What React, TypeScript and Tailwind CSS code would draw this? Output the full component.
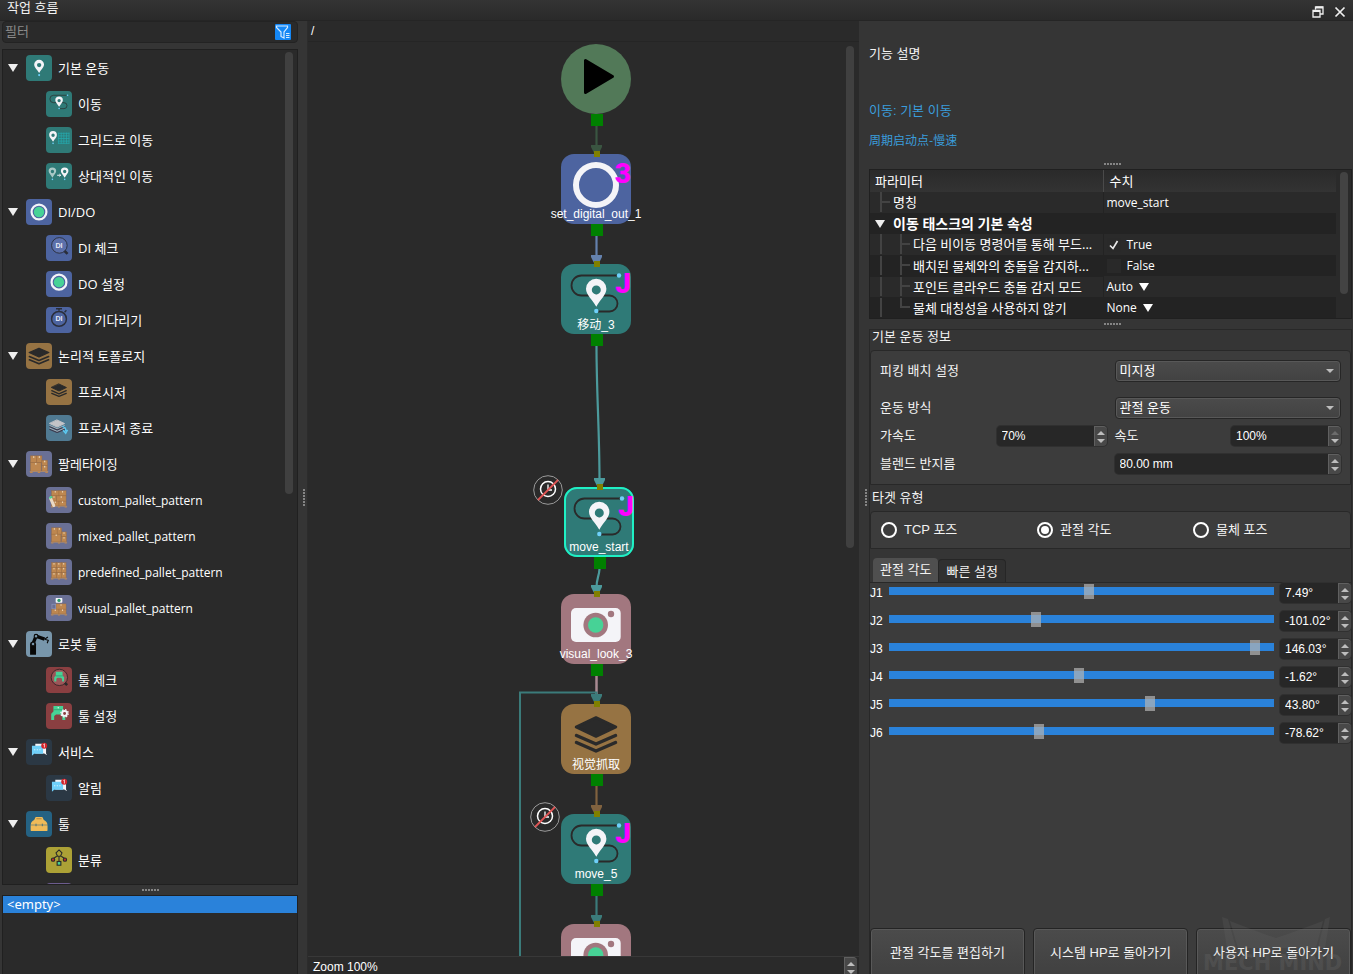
import React, { useState } from "react";
import type { ReactNode } from "react";

/* ---------- artwork, all drawn on a 70 x 70 tile ---------- */

const PIN = "M35.3 42.7C31 35 25 31 25 24.8a10.2 10 0 0 1 20.4 0C45.4 31 39.500 35 35.300 42.700ZM35.300 21.400a4.500 4.500 0 1 0 0 9a4.500 4.500 0 0 0 0-9Z";

function Pin({ transform, fill = "#f4f4f8" }: { transform?: string; fill?: string }) {
  return (
    <g transform={transform}>
      <path d={PIN} fill={fill} fillRule="evenodd" />
      <circle cx="35.300" cy="47" r="2.200" fill="#6fd0fa" />
    </g>
  );
}

function MoveArt() {
  return (
    <g>
      <path d="M56 11.500H20.500a10 10 0 0 0 0 20H48.500a8 8 0 0 1 0 16H37" fill="none" stroke="#2a2a2a" strokeWidth="1.800" />
      <circle cx="58" cy="11.500" r="2.200" fill="#6fd0fa" />
      <Pin />
    </g>
  );
}

function GridMoveArt() {
  return (
    <g>
      <Pin transform="translate(-17 -4) scale(1.020)" />
      <g stroke="#25a9ad" strokeWidth="2">
        {[34, 41, 48, 55, 62].map((v) => (
          <path key={v} d={`M${v} 15V45`} />
        ))}
        {[17, 24, 31, 38, 44].map((v) => (
          <path key={v} d={`M32 ${v}H63`} />
        ))}
      </g>
    </g>
  );
}

function RelativeArt() {
  return (
    <g>
      <Pin transform="translate(-18 -3)" fill="#a9c8c6" />
      <Pin transform="translate(15 -3)" />
      <path d="M30 33H39M36 30l4 3-4 3" stroke="#f4f4f8" strokeWidth="2.500" fill="none" />
    </g>
  );
}

function RingArt({ cy = 30, filled = true }: { cy?: number; filled?: boolean }) {
  return (
    <g>
      <circle cx="35" cy={cy} r="20" fill="none" stroke="#f4f4f8" strokeWidth="6" />
      {filled && <circle cx="35" cy={cy} r="14" fill="#47d296" />}
    </g>
  );
}

function DiArt({ timer = false }: { timer?: boolean }) {
  return (
    <g>
      {timer ? (
        <g stroke="#2a2e3a" strokeWidth="4" fill="none">
          <path d="M27 5H43M35 5V10M50 14l5-5" />
          <circle cx="35" cy="32" r="20" />
        </g>
      ) : (
        <g>
          <circle cx="36" cy="28" r="21" fill="#5c70ab" stroke="#2a2e3a" strokeWidth="2.500" />
          <path d="M50 43l8 8" stroke="#2a2e3a" strokeWidth="7" />
        </g>
      )}
      <text x="35" y={timer ? 39 : 34} textAnchor="middle" fontSize="19" fontWeight="700" fill="#e8ebf5" fontFamily="Liberation Sans, sans-serif">
        DI
      </text>
    </g>
  );
}

function LayersArt({ large = false, arrow = false }: { large?: boolean; arrow?: boolean }) {
  const t = large ? "translate(-11.200 -3) scale(1.320 1.250)" : arrow ? "translate(-5 0)" : undefined;
  const lower = arrow ? "#3c3c50" : "#2a2a2a";
  return (
    <g>
      <g transform={t} strokeLinejoin="round" strokeLinecap="round">
        <path d="M35 13.500L55 23L35 32.500L15 23Z" fill={arrow ? "#c4c4c8" : "#2a2a2a"} stroke={arrow ? "#c4c4c8" : "#2a2a2a"} strokeWidth="2.500" />
        <path d="M15.500 31.500L35 40L54.500 31.500M15.500 38.500L35 47L54.500 38.500" fill="none" stroke={lower} strokeWidth="3.500" />
        {arrow && <path d="M15.500 28.500L35 37L54.500 28.500M15.500 35.500L35 44L54.500 35.500" fill="none" stroke="#c4c4c8" strokeWidth="2" />}
      </g>
      {arrow && <path d="M44 31C52 32 54 38 53 44M46 41l7 8 5-9" fill="none" stroke="#5cc8f0" strokeWidth="4" />}
    </g>
  );
}

function CameraArt() {
  return (
    <g>
      <rect x="10" y="14" width="49.700" height="34" rx="5" fill="#f4f4f8" />
      <circle cx="34.700" cy="31" r="12.300" fill="#a2777f" />
      <circle cx="34.700" cy="31" r="7.700" fill="#47d296" />
      <circle cx="50" cy="20" r="3.200" fill="#a2777f" />
    </g>
  );
}

function Boxes({ cells }: { cells: number[][] }) {
  return (
    <g>
      {cells.map(([x, y, w, h], i) => (
        <g key={i}>
          <rect x={x} y={y} width={w} height={h} fill="#bd8750" stroke="#9a6a3c" strokeWidth="1" />
          <rect x={x + w / 2 - 1.5} y={y + 1} width="3" height="4" fill="#e9d3b4" />
        </g>
      ))}
    </g>
  );
}

function PalletArt({ kind, large = false }: { kind: "mixed" | "custom" | "grid" | "visual"; large?: boolean }) {
  const sets = {
    mixed: [[15, 13, 15, 17], [30, 13, 12, 17], [15, 30, 25, 21], [42, 24, 13, 13], [42, 37, 13, 14]],
    custom: [[15, 10, 20, 14], [35, 10, 19, 14], [15, 24, 13, 14], [28, 24, 26, 14], [15, 38, 20, 13], [35, 38, 19, 13]],
    grid: [[15, 10, 13, 13], [28, 10, 13, 13], [41, 10, 13, 13], [15, 23, 13, 14], [28, 23, 13, 14], [41, 23, 13, 14], [15, 37, 13, 14], [28, 37, 13, 14], [41, 37, 13, 14]],
    visual: [[27, 24, 27, 14], [15, 38, 20, 13], [35, 38, 19, 13]],
  };
  return (
    <g transform={large ? "translate(-5 -1) scale(1.140 1.080)" : undefined}>
      <Boxes cells={sets[kind]} />
      <path d="M13 52H57" stroke="#c99a68" strokeWidth="1.500" />
      <path d="M14 54h6M32 54h6M50 54h6" stroke="#bd8750" strokeWidth="3" />
      {kind === "custom" && (
        <g>
          <path d="M12 30L21 50" stroke="#ead9c4" strokeWidth="8" strokeLinecap="round" />
          <path d="M9 30l8-4" stroke="#47d296" strokeWidth="5" />
        </g>
      )}
      {kind === "visual" && (
        <g>
          <rect x="26" y="8" width="18" height="13" rx="2" fill="#f4f4f8" />
          <circle cx="35" cy="14.500" r="4.500" fill="#2f9c70" />
          <rect x="16" y="25" width="10" height="12" fill="none" stroke="#8b93b8" strokeWidth="2" />
        </g>
      )}
    </g>
  );
}

function RobotArt() {
  return (
    <g fill="#080808">
      <path d="M11 64V36a8 8 0 0 1 16 0V64Z" />
      <path d="M19 34L27 14L50 22" fill="none" stroke="#080808" strokeWidth="9" strokeLinejoin="round" />
      <path d="M50 22l9-6M50 22l10 3-3 8" fill="none" stroke="#080808" strokeWidth="3" />
      <circle cx="19" cy="35" r="4.500" fill="#7896ab" stroke="#080808" strokeWidth="2" />
      <circle cx="27" cy="14" r="5" fill="#7896ab" stroke="#080808" strokeWidth="3" />
    </g>
  );
}

const GRIPPER = "M22 8H48V23L54 29V46H46V35L41 31H29L24 35V46H16V29L22 23Z";

function ToolCheckArt() {
  return (
    <g>
      <circle cx="36" cy="28" r="22" fill="#9c5558" stroke="#3a2628" strokeWidth="2.500" />
      <path d={GRIPPER} fill="#47d296" transform="translate(11 7) scale(.700)" />
      <path d="M26 24H45" stroke="#2f7f60" strokeWidth="1.500" />
      <path d="M51 43l6 6" stroke="#2a2a2a" strokeWidth="7" />
    </g>
  );
}

function ToolSetArt() {
  return (
    <g>
      <path d={GRIPPER} fill="#47d296" transform="translate(-2 0)" />
      <path d="M20 18H46" stroke="#2f9c70" strokeWidth="2" />
      <circle cx="33" cy="13" r="2" fill="#d8f7e8" />
      <circle cx="50" cy="28" r="6.500" fill="#8a3f41" stroke="#f4f4f8" strokeWidth="5" />
      <circle cx="50" cy="28" r="10" fill="none" stroke="#f4f4f8" strokeWidth="3.500" strokeDasharray="4 3.850" />
    </g>
  );
}

function ChatArt() {
  return (
    <g>
      <path d="M25 13H54V39l3 5-8-5H25Z" fill="#f4f4f8" />
      <path d="M16 18H46V40H22L16 45Z" fill="#6fd0fa" />
      <path d="M22 29h3M29 29h3M36 29h3" stroke="#e9f8ff" strokeWidth="2.500" />
      <circle cx="49" cy="18" r="8" fill="#d2232a" />
      <path d="M47 15l2.500-2V23" stroke="#ffffff" strokeWidth="2" fill="none" />
    </g>
  );
}

function ToolboxArt() {
  return (
    <g>
      <path d="M12.500 37C13.500 30 17 26 22 24L26 16H44L48 24C53 26 57 30 58 37Z" fill="#f0bb58" />
      <path d="M12.500 38.500H58V52a2 2 0 0 1-2 2H14.500a2 2 0 0 1-2-2Z" fill="#f0bb58" />
      <path d="M27 34v7M44 34v7" stroke="#256283" strokeWidth="2" />
      <path d="M28 21H42" stroke="#b0863f" strokeWidth="3" />
    </g>
  );
}

function SortArt() {
  return (
    <g fill="none" stroke="#2a2a2a" strokeWidth="3">
      <path d="M35 8l8 8-4 9h-8l-4-9Z" />
      <path d="M35 25V39M29 25l-9 6M41 25l9 6" />
      <circle cx="19" cy="34" r="4.500" fill="#c02a2e" />
      <circle cx="51" cy="34" r="4.500" fill="#c02a2e" />
      <rect x="30" y="39" width="10" height="10" fill="#47d296" />
    </g>
  );
}

function Tile({ className, children }: { className: string; children?: ReactNode }) {
  return (
    <svg viewBox="0 0 70 70" className={`size-[26px] shrink-0 rounded-[4px] ${className}`} aria-hidden="true">
      {children}
    </svg>
  );
}

/* ---------- task library tree ---------- */

type TreeRow = { label: string; child?: boolean; latin?: boolean; bg: string; art: ReactNode };

const TEAL = "bg-[#2f7a77]";
const BLUE = "bg-[#4d64a0]";
const BROWN = "bg-[#967343]";
const SLATE = "bg-[#6a7095]";
const RED = "bg-[#8a3f41]";
const NAVY = "bg-[#2b3844]";

const tree: TreeRow[] = [
  { label: "기본 운동", bg: TEAL, art: <Pin transform="translate(-10.500 -6) scale(1.300 1.280)" /> },
  { label: "이동", child: true, bg: TEAL, art: <MoveArt /> },
  { label: "그리드로 이동", child: true, bg: TEAL, art: <GridMoveArt /> },
  { label: "상대적인 이동", child: true, bg: TEAL, art: <RelativeArt /> },
  { label: "DI/DO", bg: BLUE, art: <RingArt cy={35} /> },
  { label: "DI 체크", child: true, bg: BLUE, art: <DiArt /> },
  { label: "DO 설정", child: true, bg: BLUE, art: <RingArt /> },
  { label: "DI 기다리기", child: true, bg: BLUE, art: <DiArt timer /> },
  { label: "논리적 토폴로지", bg: BROWN, art: <LayersArt large /> },
  { label: "프로시저", child: true, bg: BROWN, art: <LayersArt /> },
  { label: "프로시저 종료", child: true, bg: "bg-[#507a92]", art: <LayersArt arrow /> },
  { label: "팔레타이징", bg: SLATE, art: <PalletArt kind="mixed" large /> },
  { label: "custom_pallet_pattern", child: true, latin: true, bg: SLATE, art: <PalletArt kind="custom" /> },
  { label: "mixed_pallet_pattern", child: true, latin: true, bg: SLATE, art: <PalletArt kind="mixed" /> },
  { label: "predefined_pallet_pattern", child: true, latin: true, bg: SLATE, art: <PalletArt kind="grid" /> },
  { label: "visual_pallet_pattern", child: true, latin: true, bg: SLATE, art: <PalletArt kind="visual" /> },
  { label: "로봇 툴", bg: "bg-[#7896ab]", art: <RobotArt /> },
  { label: "툴 체크", child: true, bg: RED, art: <ToolCheckArt /> },
  { label: "툴 설정", child: true, bg: RED, art: <ToolSetArt /> },
  { label: "서비스", bg: NAVY, art: <ChatArt /> },
  { label: "알림", child: true, bg: NAVY, art: <ChatArt /> },
  { label: "툴", bg: "bg-[#256283]", art: <ToolboxArt /> },
  { label: "분류", child: true, bg: "bg-[#aca136]", art: <SortArt /> },
  { label: "", child: true, bg: "bg-[#6c5c8e]", art: null },
];

function Triangle({ className }: { className: string }) {
  return (
    <svg viewBox="0 0 10 8" className={`h-2 w-2.5 shrink-0 ${className}`} aria-hidden="true">
      <path d="M0 0H10L5 8Z" fill="currentColor" />
    </svg>
  );
}

function Grip({ vertical = false }: { vertical?: boolean }) {
  return (
    <span className={vertical ? "flex flex-col gap-px" : "flex gap-px"}>
      {[0, 1, 2, 3, 4, 5].map((i) => (
        <span key={i} className="size-0.5 bg-[#858585]" />
      ))}
    </span>
  );
}

function Library() {
  return (
    <aside className="flex w-[298px] shrink-0 flex-col pl-0.5">
      <label className="flex h-[22px] shrink-0 items-center rounded-sm border border-[#232323] bg-[#2a2a2a] pr-1.5 pl-0.5">
        <input type="text" placeholder="필터" aria-label="필터" className="min-w-0 flex-1 bg-transparent leading-4 outline-none placeholder:text-[#8a8a8a]" />
        <svg viewBox="0 0 16 16" className="size-4" aria-hidden="true">
          <rect width="16" height="16" rx="1" fill="#1487f5" />
          <path d="M1.500 2H12.500V3.500L9 8V14L6 12.500V8L1.500 3.500Z" fill="none" stroke="#d6ebff" strokeWidth="1.200" />
          <path d="M11 9.500h3.500M11 11.500h3.500M11 13.500h3.500" stroke="#d6ebff" />
        </svg>
      </label>
      <div className="mt-1.5 flex min-h-0 flex-1 items-start border border-[#202020] bg-[#2a2a2a] pr-1">
        <ul className="h-full min-w-0 flex-1 overflow-hidden font-[Open_Sans,Noto_Sans_CJK_KR,sans-serif] text-[13px] text-white">
          {tree.map((row, i) => (
            <li key={i} className={row.child ? "flex h-9 items-center gap-1.5 pl-[43px]" : "flex h-9 items-center pl-[5px]"}>
              {!row.child && (
                <button type="button" aria-label={`${row.label} 접기`} className="mr-2 flex">
                  <Triangle className="text-[#efefef]" />
                </button>
              )}
              <Tile className={row.bg}>{row.art}</Tile>
              <span className={`pt-0.5 text-nowrap ${row.child ? "" : "ml-1.5"} ${row.latin ? "text-xs" : ""}`}>{row.label}</span>
            </li>
          ))}
        </ul>
        <div className="mt-0.5 h-[442px] w-2 rounded-sm bg-[#404040]" />
      </div>
      <div className="flex h-2.5 shrink-0 items-center justify-center">
        <Grip />
      </div>
      <ul className="h-[79px] shrink-0 border border-b-0 border-[#202020] bg-[#2a2a2a] font-[Noto_Sans,sans-serif] text-[13px]">
        <li className="h-[17px] bg-[#2a82da] pl-1 leading-[17px] text-white">&lt;empty&gt;</li>
      </ul>
    </aside>
  );
}

/* ---------- flow canvas ---------- */

type FlowNode = { x: number; y: number; label?: string; cjk?: boolean; bg: string; badge?: string; selected?: boolean; art: ReactNode };

const nodes: FlowNode[] = [
  { x: 253, y: 112, label: "set_digital_out_1", bg: BLUE, badge: "3", art: <RingArt cy={31} filled={false} /> },
  { x: 253, y: 222, label: "移动_3", cjk: true, bg: TEAL, badge: "J", art: <MoveArt /> },
  { x: 256, y: 445, label: "move_start", bg: TEAL, badge: "J", selected: true, art: <MoveArt /> },
  { x: 253, y: 552, label: "visual_look_3", bg: "bg-[#a2777f]", art: <CameraArt /> },
  { x: 253, y: 662, label: "视觉抓取", cjk: true, bg: BROWN, art: <LayersArt /> },
  { x: 253, y: 772, label: "move_5", bg: TEAL, badge: "J", art: <MoveArt /> },
  { x: 253, y: 882, bg: "bg-[#a2777f]", art: <CameraArt /> },
];

const edges = [
  { d: "M288.500 84V106", x: 288.5, y: 110, color: "#3a5541" },
  { d: "M288.500 194V216", x: 288.5, y: 220, color: "#6481ad" },
  { d: "M288.500 304C288.500 350 291.500 390 291.500 438", x: 291.5, y: 443, color: "#4c9a9c" },
  { d: "M291.500 527C291 535 288.500 536 288.500 546", x: 288.5, y: 550, color: "#4c9a9c" },
  { d: "M288.500 744V766", x: 288.5, y: 770, color: "#80623f" },
  { d: "M288.500 854V876", x: 288.5, y: 880, color: "#3b7b7a" },
];

function NodeCard({ node }: { node: FlowNode }) {
  return (
    <div className="absolute size-[70px]" style={{ left: node.x, top: node.y }}>
      <svg
        viewBox="0 0 70 70"
        className={`size-[70px] rounded-[13px] ${node.bg} ${node.selected ? "outline-2 -outline-offset-2 outline-[#1ff0c4]" : ""}`}
        aria-hidden="true"
      >
        {node.art}
      </svg>
      <span className="absolute -top-[3px] left-[33px] size-1.5 bg-[#808000]" />
      <span className="absolute top-[70px] left-[30px] size-3 bg-[#008000]" />
      {node.badge && (
        <span className="absolute top-1.5 right-0 font-[Roboto,sans-serif] text-[28px] leading-7 font-black text-[#ff00ff]">{node.badge}</span>
      )}
      {node.label && (
        <span className={`absolute inset-x-0 top-[52px] flex justify-center text-xs text-nowrap text-white ${node.cjk ? "leading-[19px]" : "leading-4"}`}>
          <span>{node.label}</span>
        </span>
      )}
    </div>
  );
}

function NoClock({ x, y }: { x: number; y: number }) {
  return (
    <svg viewBox="0 0 30 30" className="absolute size-[30px]" style={{ left: x, top: y }} aria-hidden="true">
      <circle cx="15" cy="15" r="14.300" fill="#2a2a2a" stroke="#9a9a9a" />
      <circle cx="15" cy="14" r="7.500" fill="none" stroke="#ffffff" strokeWidth="1.500" />
      <path d="M15 9.500V15H19" fill="none" stroke="#ffffff" strokeWidth="1.300" />
      <path d="M5 25L25 5" stroke="#e05555" strokeWidth="1.800" />
    </svg>
  );
}

function Flow() {
  return (
    <main className="flex min-w-0 flex-1 flex-col bg-[#2a2a2a]">
      <div className="h-[21px] shrink-0 border-b border-[#252525] pl-[3px] text-xs leading-[21px] text-white">/</div>
      <div className="relative min-h-0 flex-1 overflow-hidden">
        <svg viewBox="0 0 400 930" className="absolute top-0 left-0 h-[930px] w-[400px]" aria-hidden="true">
          <circle cx="288" cy="37" r="35" fill="#527958" />
          <path d="M277.500 18.500V50.500L304.500 34.500Z" fill="#000000" stroke="#000000" strokeWidth="3" strokeLinejoin="round" />
          <rect x="283" y="72" width="12" height="12" fill="#008000" />
          <path d="M288.500 634V652" stroke="#a98a92" strokeWidth="2.500" />
          <path d="M212 930V650.500H288.500V656" fill="none" stroke="#3b7b7a" strokeWidth="2" />
          <path d="M283 652H294V654L291 660H286L283 654Z" fill="#3b7b7a" />
          {edges.map((e) => (
            <g key={e.y}>
              <path d={e.d} fill="none" stroke={e.color} strokeWidth="2.200" />
              <path d={`M${e.x - 5.5} ${e.y - 7}h11v2l-3 6h-5l-3 -6Z`} fill={e.color} />
            </g>
          ))}
        </svg>
        {nodes.map((n) => (
          <NodeCard key={n.y} node={n} />
        ))}
        <NoClock x={225} y={433} />
        <NoClock x={222} y={760} />
        <div className="absolute top-1 right-[5px] h-[502px] w-2 rounded-sm bg-[#404040]" />
      </div>
      <div className="flex h-[18px] shrink-0 items-start justify-between overflow-hidden border-t border-[#383838] pr-0.5 pl-[5px]">
        <span className="text-xs leading-[21px] text-white">Zoom 100%</span>
        <span className="flex h-5"><Steps /></span>
      </div>
    </main>
  );
}

/* ---------- form controls ---------- */

function Steps({ upDisabled = false }: { upDisabled?: boolean }) {
  return (
    <span className="flex h-full w-[13px] shrink-0 flex-col items-center justify-center gap-1 rounded-r-sm border-t border-l border-[#606060] bg-[#484848]">
      <button type="button" aria-label="증가" className={upDisabled ? "text-[#6c6c6c]" : "text-[#bdbdbd]"}>
        <svg viewBox="0 0 8 4" className="block h-1 w-2"><path d="M0 4L4 0L8 4Z" fill="currentColor" /></svg>
      </button>
      <button type="button" aria-label="감소" className="text-[#bdbdbd]">
        <svg viewBox="0 0 8 4" className="block h-1 w-2"><path d="M0 0L4 4L8 0Z" fill="currentColor" /></svg>
      </button>
    </span>
  );
}

function Spin({ id, label, value, className, upDisabled }: { id: string; label?: string; value: string; className: string; upDisabled?: boolean }) {
  return (
    <span className={`flex h-5 items-stretch rounded-sm bg-[#272727] ring-1 ring-[#303030] ${className}`}>
      <input id={id} aria-label={label} type="text" defaultValue={value} className="w-0 min-w-0 flex-1 bg-transparent pl-[5px] text-xs text-white outline-none" />
      <Steps upDisabled={upDisabled} />
    </span>
  );
}

function Choice({ id, value }: { id: string; value: string }) {
  return (
    <span className="relative flex">
      <select id={id} defaultValue={value} className="h-[22px] w-full appearance-none rounded-sm border border-[#262626] bg-linear-to-b from-[#4b4b4b] to-[#424242] pl-1 leading-4 text-white ring-1 ring-[#585858] ring-inset outline-none">
        <option>{value}</option>
      </select>
      <svg viewBox="0 0 8 4" className="pointer-events-none absolute top-[9px] right-[7px] h-1 w-2" aria-hidden="true">
        <path d="M0 0H8L4 4Z" fill="#bdbdbd" />
      </svg>
    </span>
  );
}

/* ---------- parameter table ---------- */

function Guide({ kind }: { kind: "line" | "branch" | "last" }) {
  return (
    <svg viewBox="0 0 20 21" className="h-[21px] w-5 shrink-0" aria-hidden="true">
      <path d={kind === "line" ? "M1 0V20" : kind === "branch" ? "M1 0V20M1 10H10" : "M1 0V10H10"} fill="none" stroke="#434343" strokeWidth="2" />
    </svg>
  );
}

const params = [
  { name: "다음 비이동 명령어를 통해 부드...", value: "True", check: true },
  { name: "배치된 물체와의 충돌을 감지하...", value: "False", check: false },
  { name: "포인트 클라우드 충돌 감지 모드", value: "Auto" },
  { name: "물체 대칭성을 사용하지 않기", value: "None" },
];

function ParamTable() {
  return (
    <div className="flex h-[150px] shrink-0 items-start overflow-hidden border border-[#202020] bg-[#2a2a2a] pr-[3px] font-[Open_Sans,Noto_Sans_CJK_KR,sans-serif] text-[13px] text-white">
      <table className="min-w-0 flex-1 table-fixed border-collapse">
        <colgroup>
          <col className="w-1/2" />
          <col className="w-1/2" />
        </colgroup>
        <thead>
          <tr className="h-[22px] bg-linear-to-b from-[#2a2a2a] to-[#333333]">
            <th className="p-0 pl-[5px] text-left leading-5 font-normal">파라미터</th>
            <th className="border-l border-[#4a4a4a] p-0 pl-1.5 text-left leading-5 font-normal">수치</th>
          </tr>
        </thead>
        <tbody>
          <tr className="h-[21px] bg-[#2a2a2a]">
            <td className="border-r border-b border-[#232323] p-0 pl-2.5">
              <span className="flex h-5 items-center"><Guide kind="branch" /><span className="-ml-[7px] leading-5">명칭</span></span>
            </td>
            <td className="p-0 pl-[3px] text-xs leading-5">move_start</td>
          </tr>
          <tr className="h-[21px] bg-[#232323]">
            <td colSpan={2} className="p-0 pl-[5px]">
              <span className="flex h-5 items-center text-sm leading-5 font-bold">
                <button type="button" aria-label="접기" className="mr-2 flex"><Triangle className="text-[#efefef]" /></button>
                이동 태스크의 기본 속성
              </span>
            </td>
          </tr>
          {params.map((p, i) => (
            <tr key={p.name} className={i % 2 ? "h-[21px] bg-[#232323]" : "h-[21px] bg-[#2a2a2a]"}>
              <td className="border-r border-b border-[#232323] p-0 pl-2.5">
                <span className="flex h-5 items-center overflow-hidden">
                  <Guide kind="line" />
                  <Guide kind={i === 3 ? "last" : "branch"} />
                  <span className="-ml-[7px] leading-5 text-nowrap">{p.name}</span>
                </span>
              </td>
              <td className="p-0 pl-[3px] text-xs leading-5">
                {p.check === undefined ? (
                  <button type="button" className="flex items-center gap-1.5">
                    {p.value}
                    <Triangle className="text-white" />
                  </button>
                ) : (
                  <label className="flex items-center gap-1.5">
                    <span className="relative flex size-3.5">
                      <input type="checkbox" defaultChecked={p.check} className="peer size-3.5 appearance-none bg-[#292929]" />
                      <svg viewBox="0 0 14 14" className="pointer-events-none absolute inset-0 hidden size-3.5 peer-checked:block" aria-hidden="true">
                        <path d="M3 7.500L6 10.500L10.500 3" fill="none" stroke="#e8e8e8" strokeWidth="1.700" />
                      </svg>
                    </span>
                    {p.value}
                  </label>
                )}
              </td>
            </tr>
          ))}
        </tbody>
      </table>
      <div className="mt-0.5 ml-1 h-[122px] w-2 rounded-sm bg-[#434343]" />
    </div>
  );
}

/* ---------- properties panel ---------- */

const joints = [
  { name: "J1", value: 7.49, min: -185, max: 185 },
  { name: "J2", value: -101.02, min: -190, max: 45 },
  { name: "J3", value: 146.03, min: -120, max: 156 },
  { name: "J4", value: -1.62, min: -120, max: 120 },
  { name: "J5", value: 43.8, min: -120, max: 120 },
  { name: "J6", value: -78.62, min: -350, max: 350 },
];

function Joint({ name, value, min, max }: { name: string; value: number; min: number; max: number }) {
  const [v, setV] = useState(value);
  return (
    <div className="flex h-5 items-center">
      <label htmlFor={name} className="w-[19px] shrink-0 text-xs text-white">{name}</label>
      <input
        id={name}
        type="range"
        min={min}
        max={max}
        step={0.01}
        value={v}
        onChange={(e) => setV(Number(e.target.value))}
        className="h-[15px] min-w-0 flex-1 appearance-none self-start bg-transparent pt-px [&::-webkit-slider-runnable-track]:h-2 [&::-webkit-slider-runnable-track]:bg-[#2a82da] [&::-webkit-slider-thumb]:-mt-[3px] [&::-webkit-slider-thumb]:h-[15px] [&::-webkit-slider-thumb]:w-2.5 [&::-webkit-slider-thumb]:appearance-none [&::-webkit-slider-thumb]:bg-[#b4b4b4]/70"
      />
      <Spin id={`${name}-value`} label={name} value={`${v.toFixed(2)}°`} className="ml-1.5 w-[71px]" />
    </div>
  );
}

const box = "rounded-t border border-[#282828] bg-[#3c3c3c]";

function Properties() {
  const [target, setTarget] = useState("관절 각도");
  return (
    <section className="flex w-[485px] shrink-0 flex-col pr-px">
      <div className="flex shrink-0 flex-col pt-6 pb-[9px] pl-px leading-[18px]">
        <h2>기능 설명</h2>
        <p className="mt-[39px] text-[#3a9ddc]">이동: 기본 이동</p>
        <p className="mt-[11px] mb-px font-[Noto_Sans_CJK_SC,sans-serif] text-xs leading-[18px] text-[#3a9ddc]">周期启动点-慢速</p>
      </div>
      <div className="flex h-2.5 shrink-0 items-center justify-center pl-1"><Grip /></div>
      <div className="ml-px"><ParamTable /></div>
      <div className="flex h-2.5 shrink-0 items-center justify-center pl-1"><Grip /></div>

      <div className="ml-px flex min-h-0 flex-1 flex-col border-x border-t border-[#282828]">
        <h3 className="h-5 shrink-0 pl-0.5 leading-[14px]">기본 운동 정보</h3>
        <div className={`flex shrink-0 flex-col pt-[9px] pr-[9px] pb-2.5 pl-[9px] ${box}`}>
          <div className="grid grid-cols-2 items-center gap-x-2">
            <label htmlFor="pick" className="leading-4">피킹 배치 설정</label>
            <Choice id="pick" value="미지정" />
          </div>
          <div className="mt-[15px] grid grid-cols-2 items-center gap-x-2">
            <label htmlFor="motion" className="leading-4">운동 방식</label>
            <Choice id="motion" value="관절 운동" />
          </div>
          <div className="mt-[7px] grid grid-cols-2 gap-x-2">
            <span className="flex items-center justify-between">
              <label htmlFor="accel" className="leading-4">가속도</label>
              <Spin id="accel" value="70%" className="w-[110px]" />
            </span>
            <span className="flex items-center justify-between">
              <label htmlFor="speed" className="leading-4">속도</label>
              <Spin id="speed" value="100%" className="w-[110px]" upDisabled />
            </span>
          </div>
          <div className="mt-2 grid grid-cols-2 items-center gap-x-2">
            <label htmlFor="blend" className="leading-4">블렌드 반지름</label>
            <Spin id="blend" value="80.00 mm" className="w-full" />
          </div>
        </div>
        <h3 className="h-[26px] shrink-0 pl-0.5 leading-[26px]">타겟 유형</h3>
        <div className={`grid h-[38px] shrink-0 grid-cols-[156px_156px_1fr] items-center pl-2.5 ${box}`}>
          {["TCP 포즈", "관절 각도", "물체 포즈"].map((name) => (
            <label key={name} className="flex items-center gap-[7px]">
              <input
                type="radio"
                name="target"
                checked={target === name}
                onChange={() => setTarget(name)}
                className="size-4 appearance-none rounded-full border-2 border-white bg-transparent p-0.5 bg-clip-content checked:bg-white"
              />
              <span className="leading-4">{name}</span>
            </label>
          ))}
        </div>
        <div className="flex h-[33px] shrink-0 items-end pl-[3px]" role="tablist">
          <button type="button" role="tab" aria-selected="true" className="h-6 rounded-t bg-[#4f4f4f] px-[7px] leading-[22px]">관절 각도</button>
          <button type="button" role="tab" aria-selected="false" className="h-[23px] rounded-t border border-b-0 border-[#262626] bg-[#303030] px-[7px] leading-[21px]">빠른 설정</button>
        </div>
        <div className="relative flex min-h-0 flex-1 flex-col border-t border-[#282828] bg-[#3c3c3c]">
          <div className="flex flex-1 flex-col gap-2">
            {joints.map((j) => (
              <Joint key={j.name} {...j} />
            ))}
          </div>
          <div className="-mb-1 grid grid-cols-3 gap-2">
            {["관절 각도를 편집하기", "시스템 HP로 돌아가기", "사용자 HP로 돌아가기"].map((name) => (
              <button key={name} type="button" className="h-[50px] rounded-sm border border-[#242424] bg-linear-to-b from-[#4b4b4b] to-[#404040] ring-1 ring-[#595959] ring-inset">
                {name}
              </button>
            ))}
          </div>
          <svg viewBox="0 0 153 64" className="pointer-events-none absolute right-0 bottom-0 h-16 w-[153px] opacity-20" aria-hidden="true">
            <g fill="#6a6a6a">
              <path d="M24 7L30 9L38 38H29Z" />
              <path d="M32 11L66 24L78 28L90 24L125 11L118 38H40Z" />
              <path d="M132 7L127 9L120 38H127Z" />
            </g>
            <text x="5" y="60" fontSize="21" fontWeight="700" fontFamily="DejaVu Sans, sans-serif" fill="#7c7c7c">MECH MIND</text>
          </svg>
        </div>
      </div>
    </section>
  );
}

export default function App() {
  return (
    <div className="flex h-screen flex-col overflow-hidden bg-[#353535] font-[Liberation_Sans,Noto_Sans_CJK_KR,Noto_Sans_CJK_SC,sans-serif] text-[13px] text-[#f2f2f2]">
      <header className="flex h-[21px] shrink-0 items-center justify-between border-b border-[#252525] bg-linear-to-b from-[#343434] to-[#2a2a2a] pr-[7px] pl-[7px]">
        <h1 className="pb-1.5 leading-[15px]">작업 흐름</h1>
        <div className="flex gap-2.5 pt-1">
          <button type="button" aria-label="창 복원">
            <svg viewBox="0 0 12 12" className="block size-3"><path d="M3.500 3.500V1H11V8H8.500M1 4.500H8V11H1Z" fill="none" stroke="#efefef" strokeWidth="1.300" /><path d="M1 5H8M4 1.500H11" stroke="#efefef" strokeWidth="2" /></svg>
          </button>
          <button type="button" aria-label="닫기">
            <svg viewBox="0 0 12 12" className="block size-3"><path d="M1.500 1.500L10.500 10.500M10.500 1.500L1.500 10.500" stroke="#efefef" strokeWidth="1.700" /></svg>
          </button>
        </div>
      </header>
      <div className="flex min-h-0 flex-1">
        <Library />
        <div className="flex w-2.5 shrink-0 items-center justify-center border-r border-[#2c2c2c] pl-0.5"><Grip vertical /></div>
        <Flow />
        <div className="flex w-[9px] shrink-0 items-center justify-center pl-1"><Grip vertical /></div>
        <Properties />
      </div>
    </div>
  );
}
